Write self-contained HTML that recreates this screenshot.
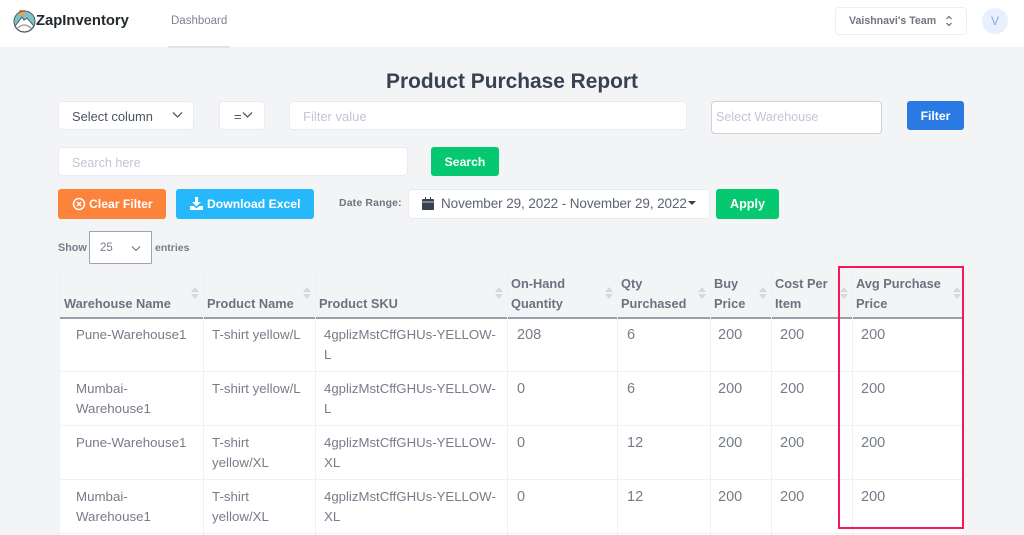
<!DOCTYPE html>
<html><head><meta charset="utf-8"><style>
html,body{margin:0;padding:0;width:1024px;height:535px;overflow:hidden;background:#f3f4f6;font-family:"Liberation Sans",sans-serif}
div,span,svg{position:absolute;display:block}
.t{white-space:nowrap;line-height:20px;font-size:13.3px;color:#767c88}
.n{font-size:14.5px}
.h{font-weight:700;font-size:12.8px;color:#6b7280}
.box{background:#fff;border:1px solid #e8ebf1;border-radius:4px;box-sizing:border-box}
.btn{border-radius:3px;color:#fff;font-weight:700;font-size:12.2px;text-align:center;box-sizing:border-box}
.ph{color:#c0c6d4;font-size:12.6px}
.v{width:1px;background:#edf1f8}
.r{height:1px;background:#edf1f8;left:59px;width:904px}
.s{width:0;height:0;border-left:4px solid transparent;border-right:4px solid transparent}
.u{border-bottom:5px solid #d5d8de}.d{border-top:5px solid #d5d8de}
</style></head><body>
<div style="left:0;top:0;width:1024px;height:47px;background:#fff"></div>
<svg style="left:12px;top:8px" width="24" height="25" viewBox="0 0 24 25"><circle cx="12.5" cy="13.5" r="10.5" fill="#7cc5c6"/><path d="M3 18L10 9L12 12L15 10L22 18Q18 24 12.5 24Q6 24 3 18Z" fill="#fff" stroke="#5d6b70" stroke-width="1.2"/><path d="M6 20Q12 14 19 20" fill="none" stroke="#9aa6a8" stroke-width="1.5"/><path d="M7 2h6v5H7z" fill="#f59b53"/><circle cx="12.5" cy="13.5" r="10.5" fill="none" stroke="#4d5a5e" stroke-width="1"/></svg>
<span class="t" style="left:36px;top:11px;font-size:14.8px;font-weight:700;color:#22282c">ZapInventory</span>
<span class="t" style="left:171px;top:11px;font-size:11.5px;color:#7c8296">Dashboard</span>
<div style="left:168px;top:46px;width:62px;height:2px;background:#e2e4ea"></div>
<div class="box" style="left:835px;top:7px;width:132px;height:28px;border-color:#eceff6"></div>
<span class="t" style="left:849px;top:11px;font-size:10.6px;font-weight:700;color:#70757f">Vaishnavi's Team</span>
<svg style="left:945px;top:15px" width="8" height="12" viewBox="0 0 8 12"><path d="M1.5 4L4 1.5L6.500 4M1.500 8L4 10.500L6.500 8" fill="none" stroke="#666c78" stroke-width="1.200"/></svg>
<div style="left:982px;top:8px;width:26px;height:26px;border-radius:50%;background:#e9f0fd"></div>
<span class="t" style="left:982px;top:11px;width:26px;text-align:center;font-size:12px;color:#8ea6ea">V</span>

<span class="t" style="left:0;width:1024px;text-align:center;top:70px;line-height:24px;font-size:20.9px;font-weight:700;color:#374151">Product Purchase Report</span>

<div class="box" style="left:58px;top:101px;width:136px;height:29px"></div>
<span class="t" style="left:72px;top:107px;color:#4b5563;font-size:12.9px">Select column</span>
<svg style="left:172px;top:111px" width="11" height="8" viewBox="0 0 11 8"><path d="M1 1.500L5.500 6L10 1.500" fill="none" stroke="#555c68" stroke-width="1.300"/></svg>
<div class="box" style="left:219px;top:101px;width:46px;height:29px"></div>
<span class="t" style="left:234px;top:107px;color:#4b5563">=</span>
<svg style="left:242px;top:111px" width="11" height="8" viewBox="0 0 11 8"><path d="M1 1.500L5.500 6L10 1.500" fill="none" stroke="#555c68" stroke-width="1.300"/></svg>
<div class="box" style="left:289px;top:101px;width:398px;height:29px"></div>
<span class="t ph" style="left:303px;top:107px;font-size:13px">Filter value</span>
<div class="box" style="left:711px;top:101px;width:171px;height:33px;border-color:#cfd1d6"></div>
<span class="t ph" style="left:716px;top:107px">Select Warehouse</span>
<div class="btn" style="left:907px;top:101px;width:57px;height:29px;line-height:30px;background:#2b7ae4">Filter</div>

<div class="box" style="left:58px;top:147px;width:350px;height:29px"></div>
<span class="t ph" style="left:72px;top:153px">Search here</span>
<div class="btn" style="left:431px;top:147px;width:68px;height:29px;line-height:31px;background:#05c871">Search</div>

<div class="btn" style="left:58px;top:189px;width:108px;height:30px;line-height:31px;background:#fb833c;padding-left:31px;text-align:left">Clear Filter</div>
<svg style="left:72px;top:197px" width="14" height="14" viewBox="0 0 14 14"><circle cx="7" cy="7" r="5.500" fill="none" stroke="#fff" stroke-width="1.500"/><path d="M5 5L9 9M9 5L5 9" stroke="#fff" stroke-width="1.500"/></svg>
<div class="btn" style="left:176px;top:189px;width:138px;height:30px;line-height:31px;background:#27b8fb;padding-left:31px;text-align:left">Download Excel</div>
<svg style="left:190px;top:197px" width="13" height="13" viewBox="0 0 13 13"><path d="M5 0h3v5h3L6.500 9.500L2 5h3zM0 9h3.500l3 2.500l3-2.500H13v4H0z" fill="#fff"/></svg>
<span class="t" style="left:339px;top:194px;font-size:10.400px;font-weight:700;color:#6b7280;letter-spacing:.2px">Date Range:</span>
<div class="box" style="left:408px;top:189px;width:302px;height:30px"></div>
<svg style="left:422px;top:197px" width="12" height="13" viewBox="0 0 12 13"><path d="M0 3Q0 2 1 2H3V0H4V2H8V0H9V2H11Q12 2 12 3V12Q12 13 11 13H1Q0 13 0 12Z" fill="#374151"/><path d="M0 5h12" stroke="#fff" stroke-width=".7"/></svg>
<span class="t" style="left:441px;top:194px;color:#5c6473;font-size:13.500px;letter-spacing:-.09px">November 29, 2022 - November 29, 2022</span>
<div class="s" style="left:688px;top:201px;border-left-width:4.500px;border-right-width:4.500px;border-top:4px solid #374151"></div>
<div class="btn" style="left:716px;top:189px;width:63px;height:30px;line-height:31px;background:#05c871;font-size:12.600px">Apply</div>

<span class="t" style="left:58px;top:238px;font-size:10.800px;font-weight:700">Show</span>
<div class="box" style="left:89px;top:231px;width:63px;height:33px;border-color:#9ca3af;border-radius:1px"></div>
<span class="t" style="left:100px;top:238px;font-size:11.500px">25</span>
<svg style="left:131px;top:245px" width="10" height="7" viewBox="0 0 10 7"><path d="M1 1.500L5 5.500L9 1.500" fill="none" stroke="#6b7280" stroke-width="1.100"/></svg>
<span class="t" style="left:155px;top:238px;font-size:10.500px;font-weight:700">entries</span>

<div style="left:59px;top:318px;width:904px;height:217px;background:#fff"></div>
<div style="left:59px;top:317px;width:904px;height:1.500px;background:#9a9ea6"></div>
<div class="v" style="left:59px;top:270px;height:265px"></div>
<div class="v" style="left:203px;top:270px;height:265px"></div>
<div class="v" style="left:315px;top:270px;height:265px"></div>
<div class="v" style="left:507px;top:270px;height:265px"></div>
<div class="v" style="left:617px;top:270px;height:265px"></div>
<div class="v" style="left:710px;top:270px;height:265px"></div>
<div class="v" style="left:771px;top:270px;height:265px"></div>
<div class="v" style="left:852px;top:270px;height:265px"></div>
<div class="r" style="top:371px"></div>
<div class="r" style="top:425px"></div>
<div class="r" style="top:479px"></div>
<div class="r" style="top:533px"></div>

<span class="t h" style="left:64px;top:294px">Warehouse Name</span>
<span class="t h" style="left:207px;top:294px">Product Name</span>
<span class="t h" style="left:319px;top:294px">Product SKU</span>
<span class="t h" style="left:511px;top:274px">On-Hand</span><span class="t h" style="left:511px;top:294px">Quantity</span>
<span class="t h" style="left:621px;top:274px">Qty</span><span class="t h" style="left:621px;top:294px">Purchased</span>
<span class="t h" style="left:714px;top:274px">Buy</span><span class="t h" style="left:714px;top:294px">Price</span>
<span class="t h" style="left:775px;top:274px">Cost Per</span><span class="t h" style="left:775px;top:294px">Item</span>
<span class="t h" style="left:856px;top:274px">Avg Purchase</span><span class="t h" style="left:856px;top:294px">Price</span>

<div class="s u" style="left:191px;top:287px"></div><div class="s d" style="left:191px;top:294px"></div>
<div class="s u" style="left:303px;top:287px"></div><div class="s d" style="left:303px;top:294px"></div>
<div class="s u" style="left:495px;top:287px"></div><div class="s d" style="left:495px;top:294px"></div>
<div class="s u" style="left:605px;top:287px"></div><div class="s d" style="left:605px;top:294px"></div>
<div class="s u" style="left:698px;top:287px"></div><div class="s d" style="left:698px;top:294px"></div>
<div class="s u" style="left:759px;top:287px"></div><div class="s d" style="left:759px;top:294px"></div>
<div class="s u" style="left:840px;top:287px"></div><div class="s d" style="left:840px;top:294px"></div>
<div class="s u" style="left:953px;top:287px"></div><div class="s d" style="left:953px;top:294px"></div>

<span class="t" style="left:76px;top:325px">Pune-Warehouse1</span>
<span class="t" style="left:212px;top:325px">T-shirt yellow/L</span>
<span class="t" style="left:324px;top:325px;font-size:13.2px">4gplizMstCffGHUs-YELLOW-</span><span class="t" style="left:324px;top:345px">L</span>
<span class="t n" style="left:517px;top:325px">208</span><span class="t n" style="left:627px;top:325px">6</span><span class="t n" style="left:718px;top:325px">200</span><span class="t n" style="left:780px;top:325px">200</span><span class="t n" style="left:861px;top:325px">200</span>

<span class="t" style="left:76px;top:379px">Mumbai-</span><span class="t" style="left:76px;top:399px">Warehouse1</span>
<span class="t" style="left:212px;top:379px">T-shirt yellow/L</span>
<span class="t" style="left:324px;top:379px;font-size:13.2px">4gplizMstCffGHUs-YELLOW-</span><span class="t" style="left:324px;top:399px">L</span>
<span class="t n" style="left:517px;top:379px">0</span><span class="t n" style="left:627px;top:379px">6</span><span class="t n" style="left:718px;top:379px">200</span><span class="t n" style="left:780px;top:379px">200</span><span class="t n" style="left:861px;top:379px">200</span>

<span class="t" style="left:76px;top:433px">Pune-Warehouse1</span>
<span class="t" style="left:212px;top:433px">T-shirt</span><span class="t" style="left:212px;top:453px">yellow/XL</span>
<span class="t" style="left:324px;top:433px;font-size:13.2px">4gplizMstCffGHUs-YELLOW-</span><span class="t" style="left:324px;top:453px">XL</span>
<span class="t n" style="left:517px;top:433px">0</span><span class="t n" style="left:627px;top:433px">12</span><span class="t n" style="left:718px;top:433px">200</span><span class="t n" style="left:780px;top:433px">200</span><span class="t n" style="left:861px;top:433px">200</span>

<span class="t" style="left:76px;top:487px">Mumbai-</span><span class="t" style="left:76px;top:507px">Warehouse1</span>
<span class="t" style="left:212px;top:487px">T-shirt</span><span class="t" style="left:212px;top:507px">yellow/XL</span>
<span class="t" style="left:324px;top:487px;font-size:13.2px">4gplizMstCffGHUs-YELLOW-</span><span class="t" style="left:324px;top:507px">XL</span>
<span class="t n" style="left:517px;top:487px">0</span><span class="t n" style="left:627px;top:487px">12</span><span class="t n" style="left:718px;top:487px">200</span><span class="t n" style="left:780px;top:487px">200</span><span class="t n" style="left:861px;top:487px">200</span>

<div style="left:838px;top:266px;width:122px;height:259px;border:2px solid #f5195c;box-sizing:content-box"></div>
</body></html>
